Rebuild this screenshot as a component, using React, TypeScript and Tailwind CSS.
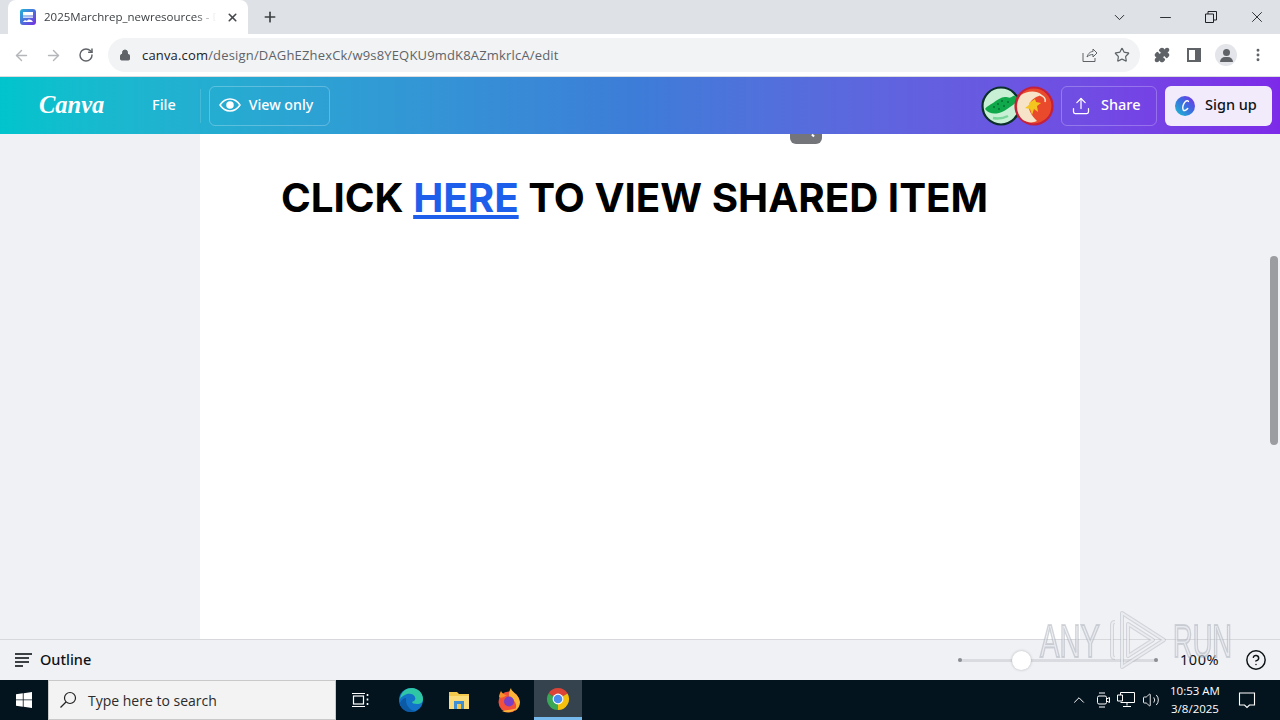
import { ArrowLeft, ArrowRight, RotateCw, Lock, Star, Puzzle, X, Plus, ChevronDown, Minus, EllipsisVertical, Upload, HelpCircle, ChevronUp, Volume2 } from "lucide-react"

const CanvaTabIcon = () => (
  <svg width="16" height="16" viewBox="0 0 16 16">
    <defs>
      <linearGradient id="tabgrad" x1="0" y1="0" x2="1" y2="1">
        <stop offset="0" stopColor="#20b6d8" />
        <stop offset="1" stopColor="#7a2be0" />
      </linearGradient>
    </defs>
    <rect width="16" height="16" rx="3" fill="url(#tabgrad)" />
    <rect x="3" y="3" width="10" height="3.500" fill="#fff" />
    <rect x="3" y="7.500" width="10" height="1.200" fill="#fff" />
    <path d="M3 13c1-2 3-2 4-1 1-2 4-2 6 1z" fill="#fff" />
  </svg>
)

const Crocs = () => (
  <svg width="40" height="40" viewBox="0 0 40 40">
    <circle cx="20" cy="20" r="18.500" fill="#c8f0d4" stroke="#0b2f2a" strokeWidth="2.200" />
    <path d="M4 23c2-3 5-4 8-6 4-3 8-6 12-6 3 0 5 2 8-1 3-1 5 1 4 4-1 3-4 5-7 7-4 3-7 5-11 6-5 1-10 1-14-4z" fill="#0fa84a" />
    <g fill="#0a6e35">
      <circle cx="13" cy="21" r="1" /><circle cx="17" cy="18" r="1" /><circle cx="21" cy="15" r="1" />
      <circle cx="18" cy="23" r="1" /><circle cx="23" cy="20" r="1" /><circle cx="27" cy="16" r="1" />
    </g>
    <path d="M12 32c5 1 11 0 15-2" stroke="#79d69a" strokeWidth="2.500" fill="none" />
  </svg>
)

const Sticker = () => (
  <svg width="40" height="40" viewBox="0 0 40 40">
    <circle cx="20" cy="20" r="18.500" fill="#ea4a2c" stroke="#c4213c" strokeWidth="2.200" />
    <path d="M7 9c-6 8-5 19 2 25 5 3 10 3 14 1-4-4-9-10-8-16 2-6 8-9 13-10-6-5-15-4-21 0z" fill="#f6e3c8" />
    <path d="M15 17l6-4 1 3 5 1-4 3 1 6-4-3-2 6-2-6-5-1 4-3z" fill="#f5c51f" />
    <path d="M26 9c4 1 6 4 5 7" stroke="#f6e3c8" strokeWidth="1.500" fill="none" />
  </svg>
)

const CanvaBadge = () => (
  <svg width="20" height="20" viewBox="0 0 20 20">
    <defs>
      <linearGradient id="badge" x1="0" y1="1" x2="1" y2="0">
        <stop offset="0" stopColor="#17c3d0" />
        <stop offset="0.55" stopColor="#3d6ae0" />
        <stop offset="1" stopColor="#7d2ae8" />
      </linearGradient>
    </defs>
    <circle cx="10" cy="10" r="10" fill="url(#badge)" />
    <path d="M13.500 5.500c-.6-1-2-1-3.300.2-2 2-3.200 6-2 8.300 1 1.200 3 .4 4.500-1.500" stroke="#fff" strokeWidth="1.400" fill="none" strokeLinecap="round" />
  </svg>
)

const WindowsLogo = () => (
  <svg width="16" height="16" viewBox="0 0 16 16" fill="#fff">
    <path d="M0 2.300 6.800 1.300V7.500H0zM7.600 1.200 16 0V7.500H7.600zM0 8.300H6.800V14.700L0 13.700zM7.600 8.300H16V16L7.600 14.800z" />
  </svg>
)

const TaskView = () => (
  <svg width="18" height="18" viewBox="0 0 18 18" fill="none" stroke="#fff" strokeWidth="1.200">
    <rect x="2.500" y="5" width="10" height="8" />
    <path d="M1 2.500h13M1 15.500h13" />
    <path d="M16.500 3v2M16.500 7.500v2M16.500 12v2" strokeWidth="1.600" />
  </svg>
)

const Edge = () => (
  <svg width="26" height="26" viewBox="0 0 26 26">
    <circle cx="13" cy="13" r="12" fill="#1273c8" />
    <path d="M2 12C3 4 9 1 14 1c6 0 11 5 11 11 0 3-2 5-6 5-3 0-5-1-5-2 3-1 4-3 3-5-1-3-5-4-8-3-3 1-6 3-7 5z" fill="#2fc6a6" />
    <path d="M8 14c0 5 5 10 10 10-8 3-15-1-16-8 1-3 4-5 6-5z" fill="#0c59a4" />
  </svg>
)

const Explorer = () => (
  <svg width="24" height="24" viewBox="0 0 24 24">
    <path d="M2 4h8l2 2h10v15H2z" fill="#f2c94c" />
    <rect x="2" y="8" width="20" height="13" fill="#fbdc7a" />
    <rect x="7" y="13" width="10" height="8" fill="#3f8fd2" />
    <rect x="10" y="16" width="4" height="5" fill="#f2c94c" />
  </svg>
)

const Firefox = () => (
  <svg width="26" height="26" viewBox="0 0 26 26">
    <circle cx="13" cy="15" r="10.500" fill="#f2503a" />
    <path d="M15 1c0 4 8 6 9 14 0 4-2 7-5 9 3-6 0-11-5-13-2-2-1-7 1-10z" fill="#fbb33a" />
    <path d="M3 10c0-2 1-4 2-6 1 2 3 4 6 4-3 2-6 4-8 2z" fill="#f98f2a" />
    <path d="M6 24c4 2 11 2 15-3-4 2-10 2-15 3z" fill="#fbb33a" />
    <circle cx="13" cy="14.500" r="5" fill="#7a3fc4" />
  </svg>
)

const Chrome = () => (
  <svg width="24" height="24" viewBox="0 0 24 24">
    <path d="M12 12 2.470 6.500A11 11 0 0 1 21.530 6.500z" fill="#db4437" />
    <path d="M12 12 21.530 6.500A11 11 0 0 1 12 23z" fill="#f4c20d" />
    <path d="M12 12 12 23A11 11 0 0 1 2.470 6.500z" fill="#3aa757" />
    <circle cx="12" cy="12" r="5.400" fill="#fff" />
    <circle cx="12" cy="12" r="4.300" fill="#4a8cf0" />
  </svg>
)

const Watermark = () => (
  <div className="absolute left-[1040px] top-[610px] w-[192px] h-[60px] flex items-center text-[47px] leading-none font-['Liberation_Sans',sans-serif] text-[rgba(225,228,233,0.6)] [-webkit-text-stroke:2px_rgba(150,155,165,0.38)] pointer-events-none">
    <span className="block w-[60px] scale-x-[0.62] origin-left whitespace-nowrap">ANY</span>
    <svg width="60" height="60" viewBox="0 0 60 60" fill="none" className="ml-[9px] shrink-0">
      <g stroke="rgba(165,170,180,0.4)" strokeWidth="4" strokeLinejoin="round">
        <path d="M6 12c-2 0-3 1-3 3v30c0 2 1 3 3 3" />
        <path d="M13 3l42 27-42 27z" />
        <path d="M19 14l25 16-25 16z" />
      </g>
      <g stroke="rgba(240,241,245,0.8)" strokeWidth="2" strokeLinejoin="round">
        <path d="M6 12c-2 0-3 1-3 3v30c0 2 1 3 3 3" />
        <path d="M13 3l42 27-42 27z" />
        <path d="M19 14l25 16-25 16z" />
      </g>
    </svg>
    <span className="block w-[60px] ml-[4px] scale-x-[0.58] origin-left whitespace-nowrap">RUN</span>
  </div>
)

export default function App() {
  return (
    <div className="relative w-[1280px] h-[720px] overflow-hidden flex flex-col bg-white font-['Open_Sans',sans-serif]">
      {/* tab strip */}
      <div className="h-[34px] bg-[#dee1e6] flex items-end shrink-0">
        <div className="ml-2 w-[240px] h-[34px] bg-white rounded-t-lg flex items-center pl-3 pr-[9px] mt-1">
          <CanvaTabIcon />
          <span className="ml-2 w-[172px] overflow-hidden whitespace-nowrap text-[11.500px] text-[#3c4043] [mask-image:linear-gradient(90deg,#000_88%,transparent)]">2025Marchrep_newresources - D</span>
          <X size={13} strokeWidth={3} className="ml-auto text-[#45484c]" />
        </div>
        <Plus size={16} strokeWidth={2.500} className="ml-[14px] mb-[9px] text-[#3c4043]" />
        <div className="ml-auto flex items-center h-[34px] text-[#202124]">
          <ChevronDown size={17} strokeWidth={1.300} className="mr-[29px]" />
          <Minus size={17} strokeWidth={1.300} className="mr-[31px]" />
          <svg width="12" height="12" viewBox="0 0 12 12" fill="none" stroke="currentColor" className="mr-[31px]">
            <path d="M.5 3h8v8.500h-8zM3 3V.5h8.500V9H8.500" />
          </svg>
          <X size={18} strokeWidth={1.200} className="mr-[14px]" />
        </div>
      </div>

      {/* toolbar */}
      <div className="h-[43px] bg-white flex items-center shrink-0 border-b border-[#dadce0]">
        <ArrowLeft size={17} className="ml-[13px] text-[#b4b6b9]" />
        <ArrowRight size={17} className="ml-[15px] text-[#b4b6b9]" />
        <RotateCw size={16} strokeWidth={2.200} className="ml-[16px] text-[#5f6368]" />
        <div className="ml-[14px] w-[1032px] h-[34px] rounded-full bg-[#f1f3f4] flex items-center pl-[11px] pr-[10px]">
          <Lock size={12} fill="#5f6368" className="text-[#5f6368]" />
          <span className="ml-[11px] pt-px text-[13px] text-[#5f6368] tracking-[0.17px]"><span className="text-[#202124]">canva.com</span>/design/DAGhEZhexCk/w9s8YEQKU9mdK8AZmkrlcA/edit</span>
          <div className="ml-auto flex items-center gap-[16px] text-[#5f6368]">
            <svg width="16" height="16" viewBox="0 0 16 16" fill="none" stroke="currentColor" strokeWidth="1">
              <path d="M1 6v8.500h12V11M5 10c1-4 4-5.500 6-5.500V2l4 4-4 4V7.500c-2 0-4 .5-6 2.500z" />
            </svg>
            <Star size={16} strokeWidth={1.800} />
          </div>
        </div>
        <Puzzle size={16} fill="#5f6368" className="ml-[14px] text-[#5f6368]" />
        <svg width="14" height="14" viewBox="0 0 14 14" className="ml-[17px]">
          <path d="M0 0h14v14H0zM2 2v10h6V2z" fill="#5f6368" fillRule="evenodd" />
        </svg>
        <div className="ml-[14px] w-[22px] h-[22px] rounded-full bg-[#e3e5ea] flex flex-col items-center justify-center">
          <div className="w-[7px] h-[7px] rounded-full bg-[#5f6368]" />
          <div className="w-[13px] h-[5px] rounded-t-md bg-[#5f6368] mt-[1px]" />
        </div>
        <EllipsisVertical size={16} strokeWidth={2.400} className="ml-[13px] text-[#5f6368]" />
      </div>

      {/* canva header */}
      <div className="h-[57px] shrink-0 flex items-center bg-gradient-to-r from-[#00c4cc] via-[#3d7cd8] to-[#7d2ae8] font-['Noto_Sans',sans-serif] text-white">
        <span className="ml-[39px] w-[65px] font-['Liberation_Serif',serif] italic font-bold text-[24.500px] leading-none">Canva</span>
        <span className="ml-[48px] pb-[2px] text-[14.500px] font-medium">File</span>
        <div className="ml-[24px] h-[34px] w-px bg-white/15" />
        <div className="ml-[8px] w-[121px] h-10 rounded-md border border-white/25 flex items-center pl-[9px] pb-px">
          <svg width="22" height="16" viewBox="0 0 22 16" fill="none" stroke="#fff" strokeWidth="1.500">
            <path d="M1 8c3-4.500 6-6 10-6s7 1.500 10 6c-3 4.500-6 6-10 6S4 12.500 1 8z" />
            <circle cx="11" cy="8" r="3" fill="#fff" />
          </svg>
          <span className="ml-[8px] pb-px text-[14.200px] font-medium">View only</span>
        </div>
        <div className="ml-auto flex items-center">
          <Crocs />
          <div className="-ml-[7px]"><Sticker /></div>
        </div>
        <div className="ml-[7px] w-[96px] h-10 rounded-md border border-white/25 flex items-center pl-[9px]">
          <Upload size={20} strokeWidth={1.500} />
          <span className="ml-[10px] pb-[2px] text-[14.500px] font-medium">Share</span>
        </div>
        <div className="ml-[8px] mr-[8px] w-[107px] h-10 rounded-md bg-[#f1ebfc] flex items-center pl-[10px] text-[#0d1216]">
          <CanvaBadge />
          <span className="ml-[10px] pb-[2px] text-[14.500px] font-medium">Sign up</span>
        </div>
      </div>

      {/* canvas */}
      <div className="relative flex-1 bg-[#f0f1f5] flex justify-center">
        <div className="relative w-[880px] bg-white">
          <div className="absolute left-[590px] top-0 w-8 h-[10px] rounded-b-md bg-[#73757a]">
            <div className="absolute left-[22px] top-0 w-[2px] h-[3px] -rotate-45 bg-white" />
          </div>
          <h1 className="mt-[34px] pr-[11px] text-center text-[40.300px] leading-[60px] font-bold text-black font-['Inter',sans-serif] whitespace-nowrap">
            CLICK <span className="text-[#1d5fea] underline decoration-[4px] underline-offset-[3px]">HERE</span> TO VIEW SHARED ITEM
          </h1>
        </div>
        <div className="absolute right-[2px] top-[122px] w-2 h-[189px] rounded-full bg-[#9b9da1]" />
      </div>

      {/* footer */}
      <div className="h-[41px] shrink-0 bg-[#f0f1f5] border-t border-[#d6d8dc] flex items-center font-['Noto_Sans',sans-serif] text-[#0d1216]">
        <svg width="18" height="14" viewBox="0 0 18 14" fill="#3c4043" className="ml-[15px]">
          <rect width="17" height="2" />
          <rect y="4" width="14" height="2" />
          <rect y="8" width="14" height="2" />
          <rect y="12" width="8" height="2" />
        </svg>
        <span className="ml-[7px] text-[14.500px] font-medium">Outline</span>
        <div className="relative ml-auto w-[200px] h-[3px] rounded-full bg-[#d9dbe0]">
          <div className="absolute left-0 -top-[0.500px] w-1 h-1 rounded-full bg-[#8a8d93]" />
          <div className="absolute right-0 -top-[0.500px] w-1 h-1 rounded-full bg-[#8a8d93]" />
          <div className="absolute left-[54px] -top-[8px] w-[19px] h-[19px] rounded-full bg-white shadow-[0_0_3px_rgba(0,0,0,0.25)]" />
        </div>
        <span className="ml-[22px] text-[14.500px] tracking-[0.5px]">100%</span>
        <HelpCircle size={22} strokeWidth={1.600} className="ml-[26px] mr-[13px]" />
      </div>

      {/* taskbar */}
      <div className="h-10 shrink-0 bg-[#04141f] flex items-center text-white font-['Open_Sans',sans-serif]">
        <div className="w-12 flex justify-center"><WindowsLogo /></div>
        <div className="w-[288px] h-10 bg-[#f3f3f3] border border-[#c9c9c9] flex items-center pl-[10px] text-[#2b2b2b]">
          <svg width="18" height="18" viewBox="0 0 18 18" fill="none" stroke="#222" strokeWidth="1.200">
            <circle cx="11" cy="7" r="5.500" />
            <path d="M7 11l-5.500 5.500" />
          </svg>
          <span className="ml-[11px] text-[14px]">Type here to search</span>
        </div>
        <div className="ml-[15px] w-[18px] flex justify-center"><TaskView /></div>
        <div className="ml-[29px]"><Edge /></div>
        <div className="ml-[23px]"><Explorer /></div>
        <div className="ml-[25px]"><Firefox /></div>
        <div className="ml-[12px] w-12 h-10 bg-[#34434e] border-b-[3px] border-[#76b9ed] flex items-center justify-center"><Chrome /></div>
        <div className="ml-auto flex items-center">
          <ChevronUp size={18} strokeWidth={1.300} className="mr-[5px]" />
          <svg width="16" height="18" viewBox="0 0 16 18" fill="none" stroke="#fff" className="ml-[3px]">
            <rect x="1.500" y="5" width="9" height="8" rx="1.500" />
            <path d="M10.500 8l3-1.500v5l-3-1.500M3 2h6M3 16h6" />
          </svg>
          <svg width="18" height="16" viewBox="0 0 18 16" fill="none" stroke="#fff" className="ml-[5px]">
            <path d="M3.500 3V.5h14v10h-14M.5 3h5v6h-5zM10 10.500v3M6 14.500h8" />
          </svg>
          <Volume2 size={18} strokeWidth={1.200} className="ml-[7px]" />
          <div className="ml-[9px] w-[52px] text-center text-[11.500px] leading-[18px] whitespace-nowrap">
            <div>10:53 AM</div>
            <div>3/8/2025</div>
          </div>
          <svg width="18" height="18" viewBox="0 0 18 18" fill="none" stroke="#fff" strokeWidth="1.100" className="ml-[17px] mr-[24px]">
            <path d="M1.500 2h15v12h-5l-2.500 2.500L6.500 14h-5z" />
          </svg>
        </div>
      </div>

      <Watermark />
    </div>
  )
}
